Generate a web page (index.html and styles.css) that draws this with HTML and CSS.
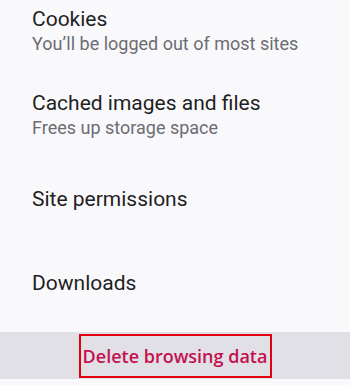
FILE: index.html
```html
<!DOCTYPE html>
<html lang="en">
<head>
<meta charset="utf-8">
<link rel="stylesheet" href="styles.css">
</head>
<body>
<div class="screen">
  <ul class="list">
    <li class="row">
      <span class="title">Cookies</span>
      <span class="sub">You’ll be logged out of most sites</span>
    </li>
    <li class="row">
      <span class="title">Cached images and files</span>
      <span class="sub">Frees up storage space</span>
    </li>
    <li class="row">
      <span class="title">Site permissions</span>
    </li>
    <li class="row">
      <span class="title">Downloads</span>
    </li>
  </ul>
  <div class="bar">
    <button class="delete">Delete browsing data</button>
  </div>
</div>
</body>
</html>
```

FILE: styles.css
```css
html, body {
  margin: 0;
  padding: 0;
  background: #f9f9fb;
}
.screen {
  width: 350px;
  height: 385px;
  overflow: hidden;
  display: flex;
  flex-direction: column;
  font-family: Roboto, "Noto Sans", sans-serif;
}
.list {
  list-style: none;
  margin: -11px 0 0 0;
  padding: 0;
}
.row {
  height: 84px;
  display: flex;
  flex-direction: column;
  justify-content: center;
  padding-left: 32px;
}
.title {
  font-size: 21px;
  line-height: 25px;
  color: #1f1f23;
}
.sub {
  font-size: 18px;
  line-height: 24px;
  color: #6c6c72;
}
.bar {
  margin-top: 7px;
  height: 47px;
  flex: none;
  background: #e0e0e6;
  display: flex;
  align-items: center;
  justify-content: center;
}
.delete {
  width: 193px;
  height: 44px;
  border: 2px solid #e3000f;
  background: transparent;
  padding: 0;
  font-family: "Open Sans", sans-serif;
  font-weight: 600;
  font-size: 18px;
  color: #c4104f;
}
```
